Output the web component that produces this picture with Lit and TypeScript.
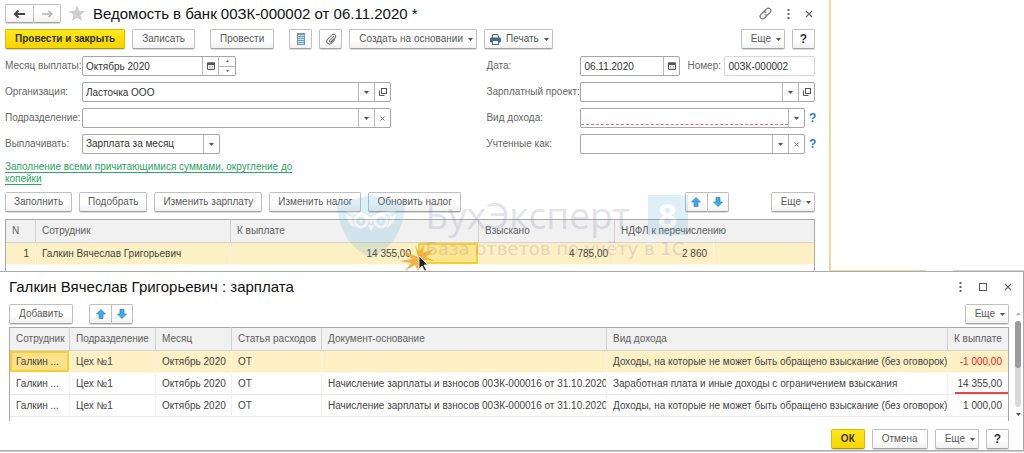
import { LitElement, html, css, svg, nothing } from "lit";
import { customElement } from "lit/decorators.js";
import { classMap } from "lit/directives/class-map.js";

const icons = {
  back: svg`<svg width="14" height="10" viewBox="0 0 14 10"><path d="M2 5h10M5.500 1.500L2 5l3.500 3.500" fill="none" stroke="#444" stroke-width="2"/></svg>`,
  forward: svg`<svg width="14" height="10" viewBox="0 0 14 10"><path d="M2 5h9M8.500 1.800L11.700 5l-3.200 3.200" fill="none" stroke="#b5b5b5" stroke-width="1.600"/></svg>`,
  star: svg`<svg width="18" height="17" viewBox="0 0 18 17"><path d="M9 .5l2.200 5.300 5.900.500-4.500 3.800 1.400 5.900L9 12.800 4 16l1.400-5.900L.9 6.300l5.900-.5z" fill="#cfcfcf"/></svg>`,
  link: svg`<svg width="13" height="13" viewBox="0 0 13 13"><g fill="none" stroke="#777" stroke-width="1.200" stroke-linecap="round"><path d="M5.500 4L7.600 1.900a2.400 2.400 0 0 1 3.500 3.500L9 7.500a2.200 2.200 0 0 1-3 .1"/><path d="M7.500 9L5.400 11.100A2.400 2.400 0 0 1 1.900 7.600L4 5.500a2.200 2.200 0 0 1 3-.1"/></g></svg>`,
  dots: svg`<svg width="3" height="10" viewBox="0 0 3 10"><g fill="#666"><rect x=".5" width="2" height="2"/><rect x=".5" y="4" width="2" height="2"/><rect x=".5" y="8" width="2" height="2"/></g></svg>`,
  close: svg`<svg width="8" height="8" viewBox="0 0 8 8"><path d="M1 1l6 6M7 1L1 7" stroke="#666" stroke-width="1.200"/></svg>`,
  maximize: svg`<svg width="8" height="8" viewBox="0 0 8 8"><rect x=".5" y=".5" width="7" height="7" fill="none" stroke="#555"/></svg>`,
  list: svg`<svg width="8" height="12" viewBox="0 0 8 12"><rect width="8" height="12" fill="#6f9ab6"/><path d="M1 2.500h6M1 4.500h6M1 6.500h6M1 8.500h6M1 10.500h6" stroke="#d6e6f0" stroke-width="1"/></svg>`,
  clip: svg`<svg width="12" height="12" viewBox="0 0 12 12"><path d="M8.600 3.600L4.500 7.700a1 1 0 0 0 1.300 1.300L10 4.900a2 2 0 0 0-3-3L2.300 6.600a2.700 2.700 0 0 0 3.800 3.800l3.600-3.600" fill="none" stroke="#777" stroke-width="1.100" stroke-linecap="round"/></svg>`,
  printer: svg`<svg width="11" height="11" viewBox="0 0 11 11"><path d="M2.500 4V.5h5L8.500 2v2" fill="#fff" stroke="#45698b"/><rect y="3.500" width="11" height="5" rx="1" fill="#45698b"/><rect x="2.500" y="6.500" width="6" height="4" fill="#fff" stroke="#45698b"/></svg>`,
  calendar: svg`<svg width="8" height="8" viewBox="0 0 8 8"><rect x=".5" y="1" width="7" height="6.500" rx=".5" fill="#fff" stroke="#555"/><rect y=".5" width="8" height="2.500" fill="#555"/><path d="M2 4.500h4M2 6h4" stroke="#888" stroke-width=".8" stroke-dasharray="1 .5"/></svg>`,
  caret: svg`<svg width="5" height="3" viewBox="0 0 5 3"><path d="M0 0h5L2.500 3z" fill="#555"/></svg>`,
  open: svg`<svg width="8" height="8" viewBox="0 0 8 8"><rect x="2.500" y=".5" width="5" height="5" fill="none" stroke="#555"/><path d="M.5 2.500v5h5" fill="none" stroke="#555"/></svg>`,
  clear: svg`<svg width="5" height="5" viewBox="0 0 5 5"><path d="M.5 .5l4 4M4.500 .5l-4 4" stroke="#777"/></svg>`,
  spinUp: svg`<svg width="3" height="2" viewBox="0 0 3 2"><path d="M0 2h3L1.500 0z" fill="#666"/></svg>`,
  spinDown: svg`<svg width="3" height="2" viewBox="0 0 3 2"><path d="M0 0h3L1.500 2z" fill="#666"/></svg>`,
  up: svg`<svg width="10" height="10" viewBox="0 0 10 10"><path d="M5 .5L9.500 5H7v4.500H3V5H.5z" fill="#3fa9e6" stroke="#2b7fb8" stroke-width=".7"/></svg>`,
  down: svg`<svg width="10" height="10" viewBox="0 0 10 10"><path d="M5 9.500L9.500 5H7V.5H3V5H.5z" fill="#3fa9e6" stroke="#2b7fb8" stroke-width=".7"/></svg>`,
  pointer: svg`<svg width="36" height="28" viewBox="0 0 36 28"><path d="M18 12L1 5l11 9-12 2 11 2-6 8 10-6 3 6 3-7 4-1-1-3 11 1-9-4 8-8-11 4 1-8-5 7-4-7z" fill="#f0ac3c" opacity=".9"/><path d="M19 11v13l3-3 2.500 5 2-1-2.500-5h4z" fill="#222" stroke="#fff" stroke-width=".8"/></svg>`,
  shield: svg`<svg width="68" height="64" viewBox="0 0 68 64"><path d="M0 8Q20 6 34 0Q48 6 68 8C67 34 58 52 34 64C10 52 1 34 0 8z" fill="#4fa8d4"/><g fill="none" stroke="#fff" stroke-width="3"><circle cx="24" cy="27" r="6"/><circle cx="44" cy="27" r="6"/></g><circle cx="24" cy="27" r="1.500" fill="#fff"/><circle cx="44" cy="27" r="1.500" fill="#fff"/><path d="M8 17Q25 15 34 24Q43 15 60 17Q56 20 51 20Q42 19 36 27L34 30L32 27Q26 19 17 20Q12 20 8 17z" fill="#fff"/><path d="M9 21Q11 31 19 34Q15 29 15 23zM59 21Q57 31 49 34Q53 29 53 23zM31 31h6l-3 6z" fill="#fff"/></svg>`,
};

type Part = "calendar" | "spin" | "caret" | "open" | "clear";

const payouts = [
  { dept: "Цех №1", month: "Октябрь 2020", item: "ОТ", doc: "", income: "Доходы, на которые не может быть обращено взыскание (без оговорок)", sum: "-1 000,00" },
  { dept: "Цех №1", month: "Октябрь 2020", item: "ОТ", doc: "Начисление зарплаты и взносов 00ЗК-000016 от 31.10.2020", income: "Заработная плата и иные доходы с ограничением взыскания", sum: "14 355,00" },
  { dept: "Цех №1", month: "Октябрь 2020", item: "ОТ", doc: "Начисление зарплаты и взносов 00ЗК-000016 от 31.10.2020", income: "Доходы, на которые не может быть обращено взыскание (без оговорок)", sum: "1 000,00" },
];

const base = css`
  * { box-sizing: border-box; }
  svg { display: block; flex: none; }
  button, input, select { font: inherit; color: inherit; margin: 0; }
  h1 { margin: 0; font-size: 15px; line-height: 18px; font-weight: 400; color: #111; white-space: nowrap; }
  .btn {
    display: inline-flex; align-items: center; justify-content: center; gap: 5px;
    height: 20px; padding: 0 9px; white-space: nowrap;
    border: 1px solid #c0c0c0; border-bottom-color: #a2a2a2; border-radius: 2px;
    background: linear-gradient(#fff 55%, #f1f1f1); color: #595959;
    box-shadow: 0 1px 0 #dcdcdc;
  }
  .menu { padding-right: 3px; }
  .with-icon { padding-left: 5px; }
  .primary {
    background: linear-gradient(#ffe81a, #f7d400); border-color: #d9bd00; border-bottom-color: #a99300;
    color: #333; font-weight: 700;
  }
  .square { width: 23px; padding: 0; }
  .help { width: 23px; padding: 0; font-size: 12px; font-weight: 700; color: #333; }
  .pair { display: flex; }
  .pair .btn { width: 22px; padding: 0; }
  .pair .btn:first-child { border-radius: 2px 0 0 2px; border-right: 0; }
  .pair .btn:last-child { border-radius: 0 2px 2px 0; }
  .plain { display: flex; align-items: center; justify-content: center; border: 0; padding: 0; background: none; }
  .grow { flex: 1; }
  table { border-collapse: separate; border-spacing: 0; table-layout: fixed; width: 100%; }
  th, td {
    padding: 0 0 0 6px; text-align: left; font-weight: 400; white-space: nowrap;
    overflow: hidden; border-right: 1px solid #f0f0f0;
  }
  th:last-child, td:last-child { border-right: 0; }
  th { height: 24px; background: #f1f1f1; color: #606060; border-top: 1px solid #a8a8a8; border-bottom: 1px solid #d4d4d4; border-right-color: #d0d0d0; }
  td { border-bottom: 1px solid #e8e8e8; color: #444; }
  .current td { background: #fdf0c4; border-right-color: #fff8e2; border-bottom-color: #fdf8e8; }
  td.num { text-align: right; padding-right: 6px; }
  .frame { border: solid #a8a8a8; border-width: 0 1px; }
`;

@customElement("app-field")
class AppField extends LitElement {
  static properties = {
    label: {}, value: {}, parts: { attribute: false }, options: { attribute: false },
    required: { type: Boolean }, readonly: { type: Boolean }, hint: { type: Boolean },
  };
  declare label: string;
  declare value: string;
  declare parts: Part[];
  declare options: string[] | undefined;
  declare required: boolean;
  declare readonly: boolean;
  declare hint: boolean;

  constructor() {
    super();
    this.label = "";
    this.value = "";
    this.parts = [];
  }

  static styles = [base, css`
    :host { display: flex; align-items: center; height: 20px; min-width: 0; }
    label { flex: none; width: var(--label-width, 77px); color: #666; white-space: nowrap; }
    .box { display: flex; flex: 1; min-width: 0; height: 20px; border: 1px solid #a6a6a6; border-radius: 2px; background: #fff; color: #333; }
    .box.readonly { border-color: #d6d6d6; }
    .cell { position: relative; display: flex; flex: 1; min-width: 0; }
    input, select { flex: 1; width: 0; min-width: 0; height: 18px; padding: 0 3px; border: 0; outline: 0; background: none; appearance: none; }
    .required input { height: 16px; margin-bottom: 2px; border-bottom: 1px dashed #f26b6b; }
    .part { width: 16px; border-left: 1px solid #b8b8b8; }
    .arrow { position: absolute; right: 0; top: 0; width: 16px; height: 18px; pointer-events: none; }
    .spin { display: flex; flex-direction: column; width: 17px; border-left: 1px solid #b8b8b8; }
    .spin .plain { flex: 1; }
    .spin .plain + .plain { border-top: 1px solid #b8b8b8; }
    .hint { width: 10px; padding-left: 4px; color: #1d86c8; font-size: 12px; font-weight: 700; line-height: 20px; text-decoration: none; }
  `];

  private part(p: Part) {
    if (p === "spin") {
      return html`<span class="spin">
        <button class="plain" aria-label="Больше">${icons.spinUp}</button>
        <button class="plain" aria-label="Меньше">${icons.spinDown}</button>
      </span>`;
    }
    return html`<button class="plain part" aria-label=${p}>${icons[p]}</button>`;
  }

  render() {
    return html`
      <label for="control">${this.label}</label>
      <div class=${classMap({ box: true, required: this.required, readonly: this.readonly })}>
        <span class="cell">
          ${this.options
            ? html`<select id="control">${this.options.map((o) => html`<option>${o}</option>`)}</select>
                <span class="plain part arrow">${icons.caret}</span>`
            : html`<input id="control" type="text" .value=${this.value} ?readonly=${this.readonly}>`}
        </span>
        ${this.parts.map((p) => this.part(p))}
      </div>
      ${this.hint ? html`<a class="hint" href="#help">?</a>` : nothing}`;
  }
}

@customElement("app-watermark")
class AppWatermark extends LitElement {
  static styles = [base, css`
    :host { position: absolute; left: 0; right: 0; top: 194px; display: flex; justify-content: center; gap: 21px; pointer-events: none; opacity: .18; }
    .words { display: flex; flex-direction: column; width: 262px; color: #6a6a96; white-space: nowrap; }
    .brand { display: flex; align-items: center; justify-content: space-between; font: 500 37px/42px "Open Sans", sans-serif; }
    .eight { width: 40px; height: 40px; background: #4fa8d4; color: #fff; text-align: center; font: 700 34px/40px "Open Sans", sans-serif; }
    .motto { font: 18px/26px "DejaVu Sans", sans-serif; }
  `];
  render() {
    return html`${icons.shield}
      <div class="words">
        <div class="brand"><span>БухЭксперт</span><span class="eight">8</span></div>
        <div class="motto">База ответов по учёту в 1С</div>
      </div>`;
  }
}

@customElement("app-statement")
class AppStatement extends LitElement {
  static styles = [base, css`
    :host { display: block; padding: 4px 14px 0 5px; border-right: 2px solid #ead9a0; background: #fff; }
    .bar { display: flex; align-items: center; gap: 7px; }
    .title { height: 19px; margin-bottom: 6px; }
    .title .pair .btn { width: 28px; height: 19px; }
    .tools { display: flex; align-items: center; gap: 15px; padding-right: 2px; }
    .actions .gap { margin-left: 8px; }
    .fields { display: grid; grid-template-columns: 387fr 329fr; column-gap: 95px; row-gap: 6px; margin: 7px 0; }
    .right { --label-width: 94px; }
    .month { width: 231px; }
    .pay { width: 215px; }
    .split { display: flex; gap: 7px; }
    .date { flex: none; width: 194px; }
    .number { --label-width: 37px; flex: 1; }
    .fill { display: block; width: 300px; line-height: 12px; color: #2aa564; text-decoration: underline; text-underline-offset: 2px; }
    .commands { margin: 7px 0; }
    .commands .btn { padding-left: 8px; padding-right: 8px; }
    .commands .pair .btn { padding: 0; }
    .commands .pair { margin-right: 35px; }
    .commands .menu { padding-left: 9px; padding-right: 3px; }
    td { height: 22px; }
    .n { width: 30px; }
    .name { width: 195px; }
    .pay1 { width: 187px; }
    .pay2 { width: 61px; }
    .held { width: 136px; }
    .tax { width: 99px; }
    .active { position: relative; overflow: visible; background: #fde68f !important; box-shadow: inset 0 0 0 2px #f8ce30; }
    .pointer { position: absolute; left: -18px; top: 2px; z-index: 1; }
    .rest { height: 6px; }
  `];
  render() {
    return html`
      <header class="bar title">
        <span class="pair">
          <button class="btn" aria-label="Назад">${icons.back}</button>
          <button class="btn" aria-label="Вперед">${icons.forward}</button>
        </span>
        <button class="plain" aria-label="Избранное">${icons.star}</button>
        <h1>Ведомость в банк 00ЗК-000002 от 06.11.2020 *</h1>
        <span class="grow"></span>
        <span class="tools">
          <button class="plain" aria-label="Ссылка">${icons.link}</button>
          <button class="plain" aria-label="Меню">${icons.dots}</button>
          <button class="plain" aria-label="Закрыть">${icons.close}</button>
        </span>
      </header>
      <div class="bar actions">
        <button class="btn primary">Провести и закрыть</button>
        <button class="btn">Записать</button>
        <button class="btn gap">Провести</button>
        <button class="btn square gap" aria-label="Реестр">${icons.list}</button>
        <button class="btn square" aria-label="Файлы">${icons.clip}</button>
        <button class="btn menu">Создать на основании ${icons.caret}</button>
        <button class="btn menu with-icon">${icons.printer} Печать ${icons.caret}</button>
        <span class="grow"></span>
        <button class="btn menu">Еще ${icons.caret}</button>
        <button class="btn help">?</button>
      </div>
      <div class="fields">
        <app-field class="month" label="Месяц выплаты:" value="Октябрь 2020" .parts=${["calendar", "spin"]}></app-field>
        <div class="right split">
          <app-field class="date" label="Дата:" value="06.11.2020" .parts=${["calendar"]}></app-field>
          <app-field class="number" label="Номер:" value="00ЗК-000002" readonly></app-field>
        </div>
        <app-field label="Организация:" value="Ласточка ООО" .parts=${["caret", "open"]}></app-field>
        <app-field class="right" label="Зарплатный проект:" .parts=${["caret", "open"]}></app-field>
        <app-field label="Подразделение:" .parts=${["caret", "clear"]}></app-field>
        <app-field class="right" label="Вид дохода:" required hint .parts=${["caret"]}></app-field>
        <app-field class="pay" label="Выплачивать:" .options=${["Зарплата за месяц"]}></app-field>
        <app-field class="right" label="Учтенные как:" hint .parts=${["caret", "clear"]}></app-field>
      </div>
      <a class="fill" href="#fill">Заполнение всеми причитающимися суммами, округление до копейки</a>
      <div class="bar commands">
        <button class="btn">Заполнить</button>
        <button class="btn">Подобрать</button>
        <button class="btn">Изменить зарплату</button>
        <button class="btn">Изменить налог</button>
        <button class="btn">Обновить налог</button>
        <span class="grow"></span>
        <span class="pair">
          <button class="btn" aria-label="Вверх">${icons.up}</button>
          <button class="btn" aria-label="Вниз">${icons.down}</button>
        </span>
        <button class="btn menu">Еще ${icons.caret}</button>
      </div>
      <div class="frame">
        <table>
          <colgroup><col class="n"><col class="name"><col class="pay1"><col class="pay2"><col class="held"><col class="tax"><col></colgroup>
          <thead>
            <tr><th>N</th><th>Сотрудник</th><th colspan="2">К выплате</th><th>Взыскано</th><th colspan="2">НДФЛ к перечислению</th></tr>
          </thead>
          <tbody>
            <tr class="current">
              <td class="num">1</td><td>Галкин Вячеслав Григорьевич</td><td class="num">14 355,00</td>
              <td class="active"><span class="pointer">${icons.pointer}</span></td>
              <td class="num">4 785,00</td><td class="num">2 860</td><td></td>
            </tr>
          </tbody>
        </table>
        <div class="rest"></div>
      </div>`;
  }
}

@customElement("app-payout-dialog")
class AppPayoutDialog extends LitElement {
  static styles = [base, css`
    :host { display: block; position: relative; z-index: 2; border: 1px solid #ababab; border-left: 0; background: #fff; padding-bottom: 1px; }
    .head { display: flex; align-items: center; height: 30px; padding: 0 11px 0 9px; margin-bottom: 2px; }
    .tools { display: flex; align-items: center; gap: 17px; }
    .body { display: grid; grid-template-columns: minmax(0, 1fr) 14px; padding-left: 9px; }
    .bar { display: flex; align-items: center; gap: 16px; margin-bottom: 3px; }
    td { height: 22px; }
    .who { width: 60px; }
    .dept { width: 86px; }
    .month { width: 76px; }
    .item { width: 90px; }
    .income { width: 341px; }
    .sum { width: 60px; }
    .active { background: #fde18a !important; box-shadow: inset 0 0 0 2px #f8ce30; }
    .negative { color: #f02020; }
    .marked { position: relative; overflow: visible; }
    .marked::after { content: ""; position: absolute; left: 7px; right: 0; bottom: 0; height: 2px; background: #e8444a; }
    .rest { height: 4px; }
    .scroll { display: flex; flex-direction: column; align-items: center; gap: 6px; padding: 8px 0 5px 4px; }
    .track { flex: 1; width: 6px; border-radius: 3px; background: #d8d8d8; }
    .thumb { height: 47px; border-radius: 3px; background: #9c9c9c; }
    .foot { display: flex; justify-content: flex-end; gap: 7px; padding: 8px 14px 0 0; }
  `];
  render() {
    return html`
      <header class="head">
        <h1>Галкин Вячеслав Григорьевич : зарплата</h1>
        <span class="grow"></span>
        <span class="tools">
          <button class="plain" aria-label="Меню">${icons.dots}</button>
          <button class="plain" aria-label="Развернуть">${icons.maximize}</button>
          <button class="plain" aria-label="Закрыть">${icons.close}</button>
        </span>
      </header>
      <div class="body">
        <div>
          <div class="bar">
            <button class="btn">Добавить</button>
            <span class="pair">
              <button class="btn" aria-label="Вверх">${icons.up}</button>
              <button class="btn" aria-label="Вниз">${icons.down}</button>
            </span>
            <span class="grow"></span>
            <button class="btn menu">Еще ${icons.caret}</button>
          </div>
          <div class="frame">
            <table>
              <colgroup><col class="who"><col class="dept"><col class="month"><col class="item"><col><col class="income"><col class="sum"></colgroup>
              <thead>
                <tr><th>Сотрудник</th><th>Подразделение</th><th>Месяц</th><th>Статья расходов</th><th>Документ-основание</th><th>Вид дохода</th><th>К выплате</th></tr>
              </thead>
              <tbody>
                ${payouts.map((r, i) => html`<tr class=${classMap({ current: i === 0 })}>
                  <td class=${classMap({ active: i === 0 })}>Галкин ...</td>
                  <td>${r.dept}</td><td>${r.month}</td><td>${r.item}</td><td>${r.doc}</td><td>${r.income}</td>
                  <td class=${classMap({ num: true, negative: r.sum.startsWith("-"), marked: i === 1 })}>${r.sum}</td>
                </tr>`)}
              </tbody>
            </table>
            <div class="rest"></div>
          </div>
        </div>
        <div class="scroll">
          <svg width="5" height="3" viewBox="0 0 5 3"><path d="M0 3h5L2.500 0z" fill="#b8b8b8"/></svg>
          <div class="track"><div class="thumb"></div></div>
          ${icons.caret}
        </div>
      </div>
      <footer class="foot">
        <button class="btn primary">ОК</button>
        <button class="btn">Отмена</button>
        <button class="btn menu">Еще ${icons.caret}</button>
        <button class="btn help">?</button>
      </footer>`;
  }
}

@customElement("app-root")
class AppRoot extends LitElement {
  static styles = css`
    :host { display: block; position: relative; background: #fff; font: 10px/12px "Liberation Sans", Arial, sans-serif; color: #444; }
    .windows { display: grid; grid-template-columns: minmax(0, 831fr) 193fr; }
    .aside { display: flex; align-items: flex-end; justify-content: space-between; }
    .edge { width: 49%; border-bottom: 1px solid #ead9a0; }
    .far { width: 37%; border-color: #d4d4d4; }
    .strip { height: 1px; background: #cfcfcf; }
  `;
  render() {
    return html`
      <div class="windows">
        <app-statement></app-statement>
        <div class="aside"><div class="edge"></div><div class="edge far"></div></div>
      </div>
      <app-watermark aria-hidden="true"></app-watermark>
      <app-payout-dialog></app-payout-dialog>
      <div class="strip"></div>`;
  }
}
